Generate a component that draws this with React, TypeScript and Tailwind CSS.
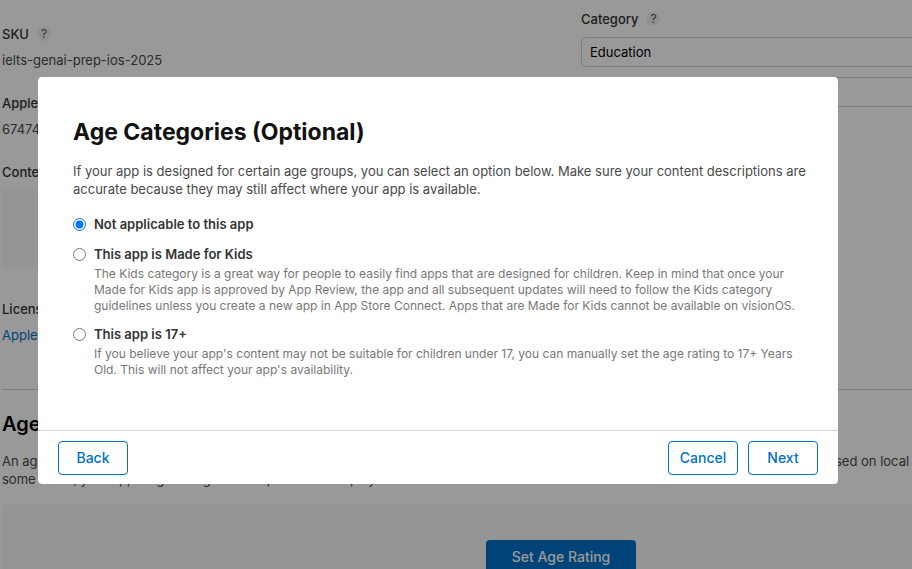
import React, { useState } from "react";

function Help({ label }: { label: string }) {
  return (
    <button
      type="button"
      aria-label={label}
      className="flex size-3.5 items-center justify-center rounded-full bg-[#f0f0f0] text-xs leading-none font-normal text-[#555]"
    >
      ?
    </button>
  );
}

function Field({ title, children }: { title: React.ReactNode; children: React.ReactNode }) {
  return (
    <div className="flex flex-col gap-2">
      <h3 className="flex items-center gap-2 font-medium text-[#333]">{title}</h3>
      <div>{children}</div>
    </div>
  );
}

function AppInformation() {
  return (
    <main className="min-w-[1120px] pl-0.5">
      <div className="grid grid-cols-2 gap-10">
        <section className="flex flex-col gap-[25px] pt-[25px]">
          <Field title={<>SKU <Help label="About SKU" /></>}>ielts-genai-prep-ios-2025</Field>
          <Field title="Apple ID">6747474531</Field>
          <Field title="Content Rights">
            <div className="h-20 w-full rounded-sm bg-[#f9f9f9]" />
          </Field>
          <div className="pt-1.5">
            <Field title="License Agreement">
              <a href="#license" className="text-[#0070c9]">Apple's Standard License Agreement</a>
            </Field>
          </div>
        </section>
        <section className="pt-2.5">
          <div className="mb-[9px] flex items-center gap-2">
            <label htmlFor="category" className="font-medium text-[#333]">Category</label>
            <Help label="About categories" />
          </div>
          <div className="flex flex-col gap-2.5">
            <select
              id="category"
              className="h-[30px] w-full appearance-none rounded-sm border border-[#d2d2d2] bg-white px-2 text-black"
            >
              <option>Education</option>
            </select>
            <select
              aria-label="Secondary category"
              className="h-[30px] w-full appearance-none rounded-sm border border-[#d2d2d2] bg-white px-2 text-black"
            />
          </div>
        </section>
      </div>
      <section className="mt-[45px] border-t border-[#d2d2d2] pt-[22px]">
        <h2 className="text-xl leading-6 font-semibold text-black">Age Rating</h2>
        <p className="mt-4 whitespace-nowrap">
          An age rating is required for every app and is calculated from your answers about its content. Ratings may vary by country or region, based on local laws. In
          <br />
          some areas, your app's age rating could impact store display.
        </p>
        <div className="mt-4 flex h-40 justify-center rounded-sm bg-[#f9f9f9] pt-9">
          <button
            type="button"
            className="h-[34px] w-[150px] rounded-sm bg-[#0070c9] text-sm font-medium text-white"
          >
            Set Age Rating
          </button>
        </div>
      </section>
    </main>
  );
}

const options = [
  { id: "none", title: "Not applicable to this app", detail: "" },
  {
    id: "kids",
    title: "This app is Made for Kids",
    detail:
      "The Kids category is a great way for people to easily find apps that are designed for children. Keep in mind that once your Made for Kids app is approved by App Review, the app and all subsequent updates will need to follow the Kids category guidelines unless you create a new app in App Store Connect. Apps that are Made for Kids cannot be available on visionOS.",
  },
  {
    id: "17",
    title: "This app is 17+",
    detail:
      "If you believe your app's content may not be suitable for children under 17, you can manually set the age rating to 17+ Years Old. This will not affect your app's availability.",
  },
];

function FooterButton({ children }: { children: React.ReactNode }) {
  return (
    <button
      type="button"
      className="h-[34px] w-[70px] rounded-sm border border-[#0070c9] bg-white text-sm font-medium text-[#0070c9]"
    >
      {children}
    </button>
  );
}

function AgeDialog() {
  const [choice, setChoice] = useState("none");
  return (
    <div className="fixed inset-0 flex items-start justify-center bg-black/40 pt-[77px] pr-9">
      <div
        role="dialog"
        aria-modal="true"
        aria-labelledby="age-title"
        className="w-full max-w-[800px] rounded-sm bg-white"
      >
        <div className="pt-10 pr-6 pb-[53px] pl-[35px]">
          <h1 id="age-title" className="text-[23px] leading-[30px] font-bold text-[#111]">
            Age Categories (Optional)
          </h1>
          <p className="mt-[15px]">
            If your app is designed for certain age groups, you can select an option below. Make sure your content descriptions are accurate because they may still affect where your app is available.
          </p>
          <div role="radiogroup" aria-labelledby="age-title" className="mt-[17px] flex flex-col gap-3">
            {options.map((o) => (
              <div key={o.id} className="flex items-start gap-2">
                <input
                  type="radio"
                  name="age"
                  id={o.id}
                  checked={choice === o.id}
                  onChange={() => setChoice(o.id)}
                  className="mt-[3px] size-[13px] shrink-0 accent-[#0075ff]"
                />
                <div>
                  <label htmlFor={o.id} className="block font-semibold text-[#333]">
                    {o.title}
                  </label>
                  {o.detail && <p className="mt-[3px] -mb-px text-xs leading-4 text-[#777]">{o.detail}</p>}
                </div>
              </div>
            ))}
          </div>
        </div>
        <footer className="flex justify-between border-t border-[#d2d2d2] px-5 pt-2.5 pb-[9px]">
          <FooterButton>Back</FooterButton>
          <div className="flex gap-2.5">
            <FooterButton>Cancel</FooterButton>
            <FooterButton>Next</FooterButton>
          </div>
        </footer>
      </div>
    </div>
  );
}

export default function App() {
  return (
    <div className="h-screen overflow-hidden bg-white font-['Inter','Liberation_Sans',sans-serif] text-[13px] leading-[18px] text-[#494949]">
      <AppInformation />
      <AgeDialog />
    </div>
  );
}
